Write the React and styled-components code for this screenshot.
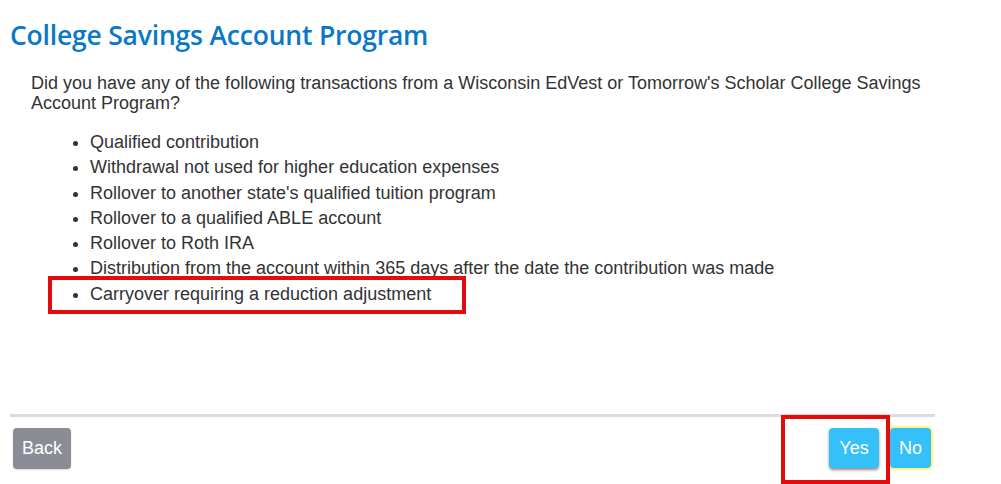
import React from 'react';
import styled, { createGlobalStyle } from 'styled-components';

const GlobalStyle = createGlobalStyle`
  html, body {
    margin: 0;
    padding: 0;
    background: #ffffff;
  }
  body {
    font-family: "Liberation Sans", Arial, sans-serif;
    color: #333333;
  }
`

export const Page = styled.div`
  position: relative;
  width: 1001px;
  height: 484px;
  overflow: hidden;
  padding: 19px 0 0 10px;
  box-sizing: border-box;
`

export const Content = styled.div`
  width: 925px;
`

export const Title = styled.h1`
  margin: 0;
  font-family: "Open Sans", "Noto Sans", sans-serif;
  font-weight: 600;
  font-size: 26.5px;
  line-height: 32px;
  color: #0a78c8;
  letter-spacing: -0.2px;
`

export const Question = styled.p`
  margin: 22px 0 0 21px;
  font-size: 18px;
  line-height: 20px;
  color: #333333;
`

export const List = styled.ul`
  margin: 17px 0 0 0;
  padding: 0 0 0 80px;
  list-style: disc;
`

export const Item = styled.li`
  font-size: 18px;
  line-height: 25.3px;
  color: #333333;
`

export const Rule = styled.hr`
  margin: ${p => p.top}px 0 0 0;
  border: none;
  height: 3px;
  background: #dddddd;
`

export const Footer = styled.div`
  display: flex;
  align-items: flex-start;
  justify-content: space-between;
  margin-top: 11px;
  padding: 0 4px 0 3px;
`

export const Group = styled.div`
  display: flex;
  gap: 11px;
`

export const Btn = styled.button`
  height: ${p => p.h || 40}px;
  min-width: ${p => p.w || 0}px;
  padding: 0 9px;
  border: none;
  border-radius: 4px;
  font-family: "Liberation Sans", Arial, sans-serif;
  font-size: 18px;
  color: #ffffff;
  background: ${p => (p.grey ? '#8a8d95' : '#36c0fa')};
  box-shadow: ${p =>
    p.focus
      ? '0 0 2px 2px #fff176'
      : p.raised
      ? '0 2px 3px rgba(0,0,0,0.45)'
      : '0 1px 2px rgba(0,0,0,0.15)'};
  cursor: pointer;
`

export const Marker = styled.div`
  position: absolute;
  border: 4px solid #e30b0b;
  box-sizing: border-box;
`

const items = [
  'Qualified contribution',
  'Withdrawal not used for higher education expenses',
  "Rollover to another state's qualified tuition program",
  'Rollover to a qualified ABLE account',
  'Rollover to Roth IRA',
  'Distribution from the account within 365 days after the date the contribution was made',
  'Carryover requiring a reduction adjustment',
]

const App = () => {
  return (
    <>
      <GlobalStyle />
      <Page>
        <Content>
          <Title>College Savings Account Program</Title>
          <Question>
            Did you have any of the following transactions from a Wisconsin EdVest or Tomorrow's Scholar College Savings
            Account Program?
          </Question>
          <List>
            {items.map(t => (
              <Item key={t}>{t}</Item>
            ))}
          </List>
          <Rule top={107} />
          <Footer>
            <Btn grey h={41} w={57}>Back</Btn>
            <Group>
              <Btn raised w={50}>Yes</Btn>
              <Btn focus w={41}>No</Btn>
            </Group>
          </Footer>
        </Content>
        <Marker style={{ left: 48, top: 276, width: 418, height: 38 }} />
        <Marker style={{ left: 781, top: 415, width: 109, height: 69 }} />
      </Page>
    </>
  )
}

export default App;
